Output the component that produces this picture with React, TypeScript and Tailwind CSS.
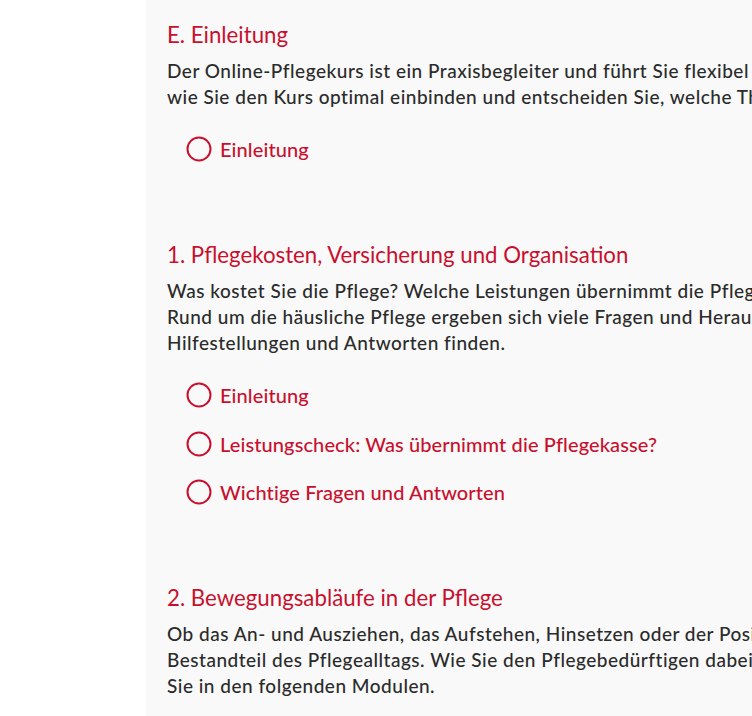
import React from 'react';

type Section = {
  title: string;
  text: string[];
  items: string[];
};

const sections: Section[] = [
  {
    title: 'E. Einleitung',
    text: [
      'Der Online-Pflegekurs ist ein Praxisbegleiter und führt Sie flexibel durch alle Themen der häuslichen Pflege. Entdecken Sie,',
      'wie Sie den Kurs optimal einbinden und entscheiden Sie, welche Themen für Sie wichtig sind.',
    ],
    items: ['Einleitung'],
  },
  {
    title: '1. Pflegekosten, Versicherung und Organisation',
    text: [
      'Was kostet Sie die Pflege? Welche Leistungen übernimmt die Pflegekasse und wie organisieren Sie die Pflege zu Hause?',
      'Rund um die häusliche Pflege ergeben sich viele Fragen und Herausforderungen. Hier können Sie Informationen,',
      'Hilfestellungen und Antworten finden.',
    ],
    items: ['Einleitung', 'Leistungscheck: Was übernimmt die Pflegekasse?', 'Wichtige Fragen und Antworten'],
  },
  {
    title: '2. Bewegungsabläufe in der Pflege',
    text: [
      'Ob das An- und Ausziehen, das Aufstehen, Hinsetzen oder der Positionswechsel im Bett – Bewegung ist ein wichtiger',
      'Bestandteil des Pflegealltags. Wie Sie den Pflegebedürftigen dabei unterstützen und sich selbst schonen, erfahren',
      'Sie in den folgenden Modulen.',
    ],
    items: [],
  },
];

const Circle = () => (
  <svg width="26" height="26" viewBox="0 0 26 26" className="shrink-0">
    <circle cx="13" cy="13" r="11.5" fill="none" stroke="#c8102e" strokeWidth="2" />
  </svg>
);

export default function App() {
  return (
    <div className="h-[716px] w-[752px] overflow-hidden bg-white" style={{ fontFamily: 'Lato, "Noto Sans", sans-serif' }}>
      <div className="ml-[146px] flex h-full w-[1000px] flex-col bg-[#f9f9f9] pl-[21px] pt-[20px]">
        {sections.map((s) => (
          <section key={s.title} className="mb-[78px]">
            <h2 className="text-[22.25px] leading-[30px] text-[#c8102e]">{s.title}</h2>
            <div className="mt-[8px] whitespace-nowrap text-[19px] font-medium leading-[26px] tracking-[0.5px] text-[#2b2b2b]">
              {s.text.map((t) => (
                <p key={t}>{t}</p>
              ))}
            </div>
            {s.items.length > 0 && (
              <ul className="mt-[26px] flex flex-col gap-[22.5px] pl-[19px]">
                {s.items.map((it) => (
                  <li key={it} className="flex items-center gap-[8px] text-[20px] font-medium leading-[26px] tracking-[0.1px] text-[#c8102e]">
                    <Circle />
                    <span>{it}</span>
                  </li>
                ))}
              </ul>
            )}
          </section>
        ))}
      </div>
    </div>
  );
}
